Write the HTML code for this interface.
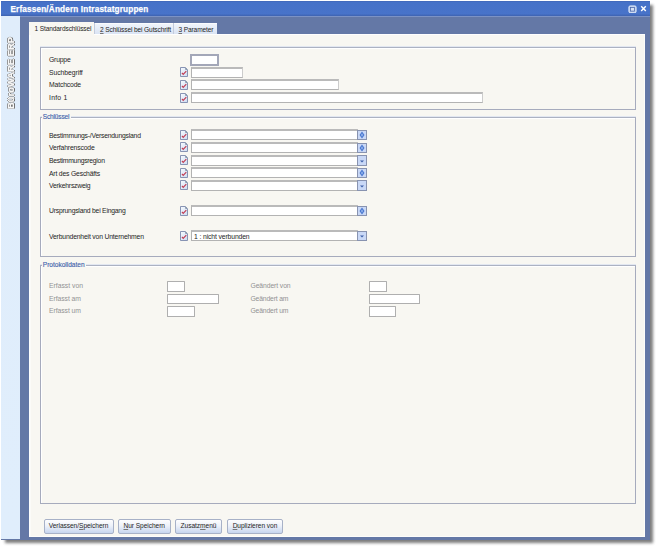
<!DOCTYPE html>
<html><head><meta charset="utf-8">
<style>
html,body{margin:0;padding:0;background:#fff;width:659px;height:548px;overflow:hidden;}
body{font-family:"Liberation Sans",sans-serif;position:relative;}
.a{position:absolute;}
.shadow{left:5px;top:5px;width:648px;height:538px;background:#6e6e6e;filter:blur(1.6px);opacity:.9;}
u{text-decoration-color:#777;text-decoration-thickness:0.6px;text-underline-offset:0.8px;}
.win{left:1px;top:1px;width:649px;height:539px;background:#6478a6;}
.title{left:1px;top:1px;width:649px;height:15px;background:linear-gradient(#3f64b4 0,#4672c8 8%,#4873c9 85%,#3e62b0 100%);}
.ttext{left:10.5px;top:4.5px;font-size:8.2px;font-weight:bold;color:#fff;white-space:nowrap;line-height:10px;letter-spacing:0.16px;-webkit-text-stroke:0.25px #fff;}
.side{left:1px;top:16px;width:19px;height:523px;background:linear-gradient(to bottom,#e0edfb,#e0eefc);}
.content{left:29px;top:34px;width:616px;height:502.5px;background:#f8f7f2;box-shadow:inset 1px 1px 0 #fefefe,inset 2px 0 0 #fbfbf8,inset -1px -1px 0 #fdfdfb;}
.tab{font-size:6.6px;letter-spacing:-0.13px;color:#1e1e1e;white-space:nowrap;line-height:8px;}
.tab1{left:29px;top:22px;width:65px;height:13px;background:#f8f7f2;}
.tab2{left:94px;top:23px;width:79px;height:11px;background:linear-gradient(#f2f6fc,#dae4f4);box-shadow:inset 1px 0 0 #c3cbdc,inset 0 1px 0 #fbfcfe;}
.tab3{left:173px;top:23px;width:44px;height:11px;background:linear-gradient(#f2f6fc,#dae4f4);box-shadow:inset 1px 0 0 #c3cbdc,inset 0 1px 0 #fbfcfe;}
.grp{border:1px solid #a6abbd;border-top-color:#acb2c2;box-shadow:inset 1px 1px 0 #fff,0 -1px 0 #e2e7f1;}
.lbl{font-size:6.8px;color:#1e1e1e;white-space:nowrap;left:49px;line-height:8px;letter-spacing:-0.17px;}
.gl{color:#929292;}
.leg{font-size:6.6px;letter-spacing:-0.1px;color:#3d61ab;background:#f8f7f2;padding:0 1.3px 0 1px;white-space:nowrap;line-height:8px;-webkit-text-stroke:0.12px #3d61ab;}
.inp{background:#fff;border:1px solid #b3b3b3;border-top:2px solid #bababa;border-right-color:#cccccc;box-sizing:border-box;}
.inp2{background:#fff;border:1px solid #afafaf;border-radius:0.6px;box-sizing:border-box;}
.ico{width:8px;height:10px;}
.btn{height:14.5px;top:519px;box-sizing:border-box;border:1px solid #a7b1c7;border-radius:2px;background:linear-gradient(#fdfdfe,#edf1f9 45%,#c6d5ef);font-size:6.6px;color:#1e1e1e;text-align:center;line-height:12.5px;white-space:nowrap;letter-spacing:-0.05px;}
.sb{width:10px;box-sizing:border-box;border:1px solid #8893b0;background:#c9d8f6;}
</style></head><body>
<div class="a shadow"></div>
<div class="a win"></div>
<div class="a title"></div>
<div class="a ttext">Erfassen/Ändern Intrastatgruppen</div>
<svg class="a" style="left:627.5px;top:4.5px" width="9" height="8.5" viewBox="0 0 9 8.5"><rect x=".9" y=".9" width="7.2" height="6.8" rx="1.3" fill="#b4c6ea" stroke="#e8effa" stroke-width=".9"/><rect x="2.6" y="2.5" width="3.8" height="3.6" fill="#d6e1f5" stroke="#4a66a8" stroke-width=".75"/></svg>
<svg class="a" style="left:640px;top:5px" width="7" height="7" viewBox="0 0 7 7"><path d="M1.2 1.2L5.8 5.9M5.8 1.2L1.2 5.9" stroke="#fff" stroke-width="1.4"/></svg>
<div class="a" style="left:20px;top:16px;width:630px;height:1px;background:#7c92c4"></div>
<div class="a side"></div>
<div class="a" style="left:-25.5px;top:67.5px;width:72px;height:10px;transform:rotate(-90deg) scaleY(1.03);font-size:9.4px;font-weight:bold;color:#f6f8fa;text-shadow:0 0.9px 0.2px #404040,0 -0.8px 0.2px #707070,0.6px 0 0.2px #808080,-0.6px 0 0.2px #808080;filter:grayscale(1);-webkit-text-stroke:0.45px #f7f8fa;white-space:nowrap;text-align:center;line-height:10px;">BüroWARE ERP</div>
<div class="a content"></div>
<div class="a tab tab2"></div>
<div class="a tab tab3"></div>
<div class="a tab tab1"></div>
<div class="a tab" style="left:34.5px;top:25px">1 Standardschlüssel</div>
<div class="a tab" style="left:100px;top:25.6px"><u>2</u> Schlüssel bei Gutschrift</div>
<div class="a tab" style="left:178.5px;top:25.6px"><u>3</u> Parameter</div>
<div class="a grp" style="left:40px;top:47px;width:594px;height:61px;"></div>
<div class="a lbl" style="top:56px;letter-spacing:-0.2px">Gruppe</div>
<div class="a lbl" style="top:68.5px;letter-spacing:-0.05px">Suchbegriff</div>
<div class="a lbl" style="top:81px;letter-spacing:-0.15px">Matchcode</div>
<div class="a lbl" style="top:93.5px;letter-spacing:0.25px">Info 1</div>
<div class="a" style="left:190px;top:53.5px;width:29px;height:12px;box-sizing:border-box;border:2px solid #a3a7b8;background:#fff;"></div>
<div class="a inp" style="left:191px;top:66.8px;width:52px;height:11px"></div>
<svg class="a ico" style="left:180px;top:67.3px" width="8" height="10" viewBox="0 0 8 10"><defs><linearGradient id="g0" x1="0" y1="0" x2="1" y2="1"><stop offset="0" stop-color="#f8fbff"/><stop offset="1" stop-color="#cddcf2"/></linearGradient></defs><path d="M.5 .5H5.3L7.5 2.7V9.5H.5Z" fill="url(#g0)" stroke="#7c89ac" stroke-width=".9"/><path d="M5.3 .5L7.5 2.7L5.3 2.7Z" fill="#6e8096"/><path d="M1.9 5.9L3.2 7.3L6.3 4.2" fill="none" stroke="#c23a50" stroke-width="1.15"/></svg>
<div class="a inp" style="left:191px;top:79.2px;width:148px;height:11px"></div>
<svg class="a ico" style="left:180px;top:79.7px" width="8" height="10" viewBox="0 0 8 10"><defs><linearGradient id="g1" x1="0" y1="0" x2="1" y2="1"><stop offset="0" stop-color="#f8fbff"/><stop offset="1" stop-color="#cddcf2"/></linearGradient></defs><path d="M.5 .5H5.3L7.5 2.7V9.5H.5Z" fill="url(#g1)" stroke="#7c89ac" stroke-width=".9"/><path d="M5.3 .5L7.5 2.7L5.3 2.7Z" fill="#6e8096"/><path d="M1.9 5.9L3.2 7.3L6.3 4.2" fill="none" stroke="#c23a50" stroke-width="1.15"/></svg>
<div class="a inp" style="left:191px;top:92px;width:292px;height:11px"></div>
<svg class="a ico" style="left:180px;top:92.5px" width="8" height="10" viewBox="0 0 8 10"><defs><linearGradient id="g2" x1="0" y1="0" x2="1" y2="1"><stop offset="0" stop-color="#f8fbff"/><stop offset="1" stop-color="#cddcf2"/></linearGradient></defs><path d="M.5 .5H5.3L7.5 2.7V9.5H.5Z" fill="url(#g2)" stroke="#7c89ac" stroke-width=".9"/><path d="M5.3 .5L7.5 2.7L5.3 2.7Z" fill="#6e8096"/><path d="M1.9 5.9L3.2 7.3L6.3 4.2" fill="none" stroke="#c23a50" stroke-width="1.15"/></svg>
<div class="a grp" style="left:40px;top:117px;width:594px;height:138px;"></div>
<div class="a leg" style="left:41.8px;top:113.3px;letter-spacing:-0.2px">Schlüssel</div>
<div class="a lbl" style="top:131.5px;letter-spacing:-0.22px">Bestimmungs-/Versendungsland</div>
<div class="a lbl" style="top:144px;letter-spacing:-0.14px">Verfahrenscode</div>
<div class="a lbl" style="top:156.5px;letter-spacing:-0.26px">Bestimmungsregion</div>
<div class="a lbl" style="top:169.5px;letter-spacing:-0.18px">Art des Geschäfts</div>
<div class="a lbl" style="top:182px;letter-spacing:-0.22px">Verkehrszweig</div>
<div class="a lbl" style="top:207px;letter-spacing:-0.22px">Ursprungsland bei Eingang</div>
<div class="a lbl" style="top:232.5px;letter-spacing:-0.17px">Verbundenheit von Unternehmen</div>
<div class="a inp" style="left:191px;top:129.3px;width:167px;height:11.2px"></div>
<div class="a sb" style="left:357px;top:129.9px;height:10.6px"></div><svg class="a" style="left:359px;top:131.20000000000002px" width="6" height="8" viewBox="0 0 6 8"><path d="M3 .5L5.5 4L3 7.5L.5 4Z" fill="#4a78d0"/><path d="M3 2.2L4.2 4L3 5.8L1.8 4Z" fill="#8fb0ea"/></svg>
<svg class="a ico" style="left:180px;top:129.8px" width="8" height="10" viewBox="0 0 8 10"><defs><linearGradient id="g3" x1="0" y1="0" x2="1" y2="1"><stop offset="0" stop-color="#f8fbff"/><stop offset="1" stop-color="#cddcf2"/></linearGradient></defs><path d="M.5 .5H5.3L7.5 2.7V9.5H.5Z" fill="url(#g3)" stroke="#7c89ac" stroke-width=".9"/><path d="M5.3 .5L7.5 2.7L5.3 2.7Z" fill="#6e8096"/><path d="M1.9 5.9L3.2 7.3L6.3 4.2" fill="none" stroke="#c23a50" stroke-width="1.15"/></svg>
<div class="a inp" style="left:191px;top:141.9px;width:167px;height:11.2px"></div>
<div class="a sb" style="left:357px;top:142.5px;height:10.6px"></div><svg class="a" style="left:359px;top:143.8px" width="6" height="8" viewBox="0 0 6 8"><path d="M3 .5L5.5 4L3 7.5L.5 4Z" fill="#4a78d0"/><path d="M3 2.2L4.2 4L3 5.8L1.8 4Z" fill="#8fb0ea"/></svg>
<svg class="a ico" style="left:180px;top:142.4px" width="8" height="10" viewBox="0 0 8 10"><defs><linearGradient id="g4" x1="0" y1="0" x2="1" y2="1"><stop offset="0" stop-color="#f8fbff"/><stop offset="1" stop-color="#cddcf2"/></linearGradient></defs><path d="M.5 .5H5.3L7.5 2.7V9.5H.5Z" fill="url(#g4)" stroke="#7c89ac" stroke-width=".9"/><path d="M5.3 .5L7.5 2.7L5.3 2.7Z" fill="#6e8096"/><path d="M1.9 5.9L3.2 7.3L6.3 4.2" fill="none" stroke="#c23a50" stroke-width="1.15"/></svg>
<div class="a inp" style="left:191px;top:154.6px;width:167px;height:11.2px"></div>
<div class="a sb" style="left:357px;top:155.2px;height:10.6px"></div><svg class="a" style="left:359px;top:156.5px" width="6" height="8" viewBox="0 0 6 8"><path d="M1 3.5H5L3 5.5Z" fill="#3d5fa8"/></svg>
<svg class="a ico" style="left:180px;top:155.1px" width="8" height="10" viewBox="0 0 8 10"><defs><linearGradient id="g5" x1="0" y1="0" x2="1" y2="1"><stop offset="0" stop-color="#f8fbff"/><stop offset="1" stop-color="#cddcf2"/></linearGradient></defs><path d="M.5 .5H5.3L7.5 2.7V9.5H.5Z" fill="url(#g5)" stroke="#7c89ac" stroke-width=".9"/><path d="M5.3 .5L7.5 2.7L5.3 2.7Z" fill="#6e8096"/><path d="M1.9 5.9L3.2 7.3L6.3 4.2" fill="none" stroke="#c23a50" stroke-width="1.15"/></svg>
<div class="a inp" style="left:191px;top:167.2px;width:167px;height:11.2px"></div>
<div class="a sb" style="left:357px;top:167.79999999999998px;height:10.6px"></div><svg class="a" style="left:359px;top:169.1px" width="6" height="8" viewBox="0 0 6 8"><path d="M3 .5L5.5 4L3 7.5L.5 4Z" fill="#4a78d0"/><path d="M3 2.2L4.2 4L3 5.8L1.8 4Z" fill="#8fb0ea"/></svg>
<svg class="a ico" style="left:180px;top:167.7px" width="8" height="10" viewBox="0 0 8 10"><defs><linearGradient id="g6" x1="0" y1="0" x2="1" y2="1"><stop offset="0" stop-color="#f8fbff"/><stop offset="1" stop-color="#cddcf2"/></linearGradient></defs><path d="M.5 .5H5.3L7.5 2.7V9.5H.5Z" fill="url(#g6)" stroke="#7c89ac" stroke-width=".9"/><path d="M5.3 .5L7.5 2.7L5.3 2.7Z" fill="#6e8096"/><path d="M1.9 5.9L3.2 7.3L6.3 4.2" fill="none" stroke="#c23a50" stroke-width="1.15"/></svg>
<div class="a inp" style="left:191px;top:179.8px;width:167px;height:11.2px"></div>
<div class="a sb" style="left:357px;top:180.4px;height:10.6px"></div><svg class="a" style="left:359px;top:181.70000000000002px" width="6" height="8" viewBox="0 0 6 8"><path d="M1 3.5H5L3 5.5Z" fill="#3d5fa8"/></svg>
<svg class="a ico" style="left:180px;top:180.3px" width="8" height="10" viewBox="0 0 8 10"><defs><linearGradient id="g7" x1="0" y1="0" x2="1" y2="1"><stop offset="0" stop-color="#f8fbff"/><stop offset="1" stop-color="#cddcf2"/></linearGradient></defs><path d="M.5 .5H5.3L7.5 2.7V9.5H.5Z" fill="url(#g7)" stroke="#7c89ac" stroke-width=".9"/><path d="M5.3 .5L7.5 2.7L5.3 2.7Z" fill="#6e8096"/><path d="M1.9 5.9L3.2 7.3L6.3 4.2" fill="none" stroke="#c23a50" stroke-width="1.15"/></svg>
<div class="a inp" style="left:191px;top:205.1px;width:167px;height:11.2px"></div>
<div class="a sb" style="left:357px;top:205.7px;height:10.6px"></div><svg class="a" style="left:359px;top:207.0px" width="6" height="8" viewBox="0 0 6 8"><path d="M3 .5L5.5 4L3 7.5L.5 4Z" fill="#4a78d0"/><path d="M3 2.2L4.2 4L3 5.8L1.8 4Z" fill="#8fb0ea"/></svg>
<svg class="a ico" style="left:180px;top:205.6px" width="8" height="10" viewBox="0 0 8 10"><defs><linearGradient id="g8" x1="0" y1="0" x2="1" y2="1"><stop offset="0" stop-color="#f8fbff"/><stop offset="1" stop-color="#cddcf2"/></linearGradient></defs><path d="M.5 .5H5.3L7.5 2.7V9.5H.5Z" fill="url(#g8)" stroke="#7c89ac" stroke-width=".9"/><path d="M5.3 .5L7.5 2.7L5.3 2.7Z" fill="#6e8096"/><path d="M1.9 5.9L3.2 7.3L6.3 4.2" fill="none" stroke="#c23a50" stroke-width="1.15"/></svg>
<div class="a inp" style="left:191px;top:230px;width:167px;height:11.2px"></div>
<div class="a sb" style="left:357px;top:230.6px;height:10.6px"></div><svg class="a" style="left:359px;top:231.9px" width="6" height="8" viewBox="0 0 6 8"><path d="M1 3.5H5L3 5.5Z" fill="#3d5fa8"/></svg>
<svg class="a ico" style="left:180px;top:230.5px" width="8" height="10" viewBox="0 0 8 10"><defs><linearGradient id="g9" x1="0" y1="0" x2="1" y2="1"><stop offset="0" stop-color="#f8fbff"/><stop offset="1" stop-color="#cddcf2"/></linearGradient></defs><path d="M.5 .5H5.3L7.5 2.7V9.5H.5Z" fill="url(#g9)" stroke="#7c89ac" stroke-width=".9"/><path d="M5.3 .5L7.5 2.7L5.3 2.7Z" fill="#6e8096"/><path d="M1.9 5.9L3.2 7.3L6.3 4.2" fill="none" stroke="#c23a50" stroke-width="1.15"/></svg>
<div class="a lbl" style="left:194px;top:232.5px;letter-spacing:-0.12px">1 : nicht verbunden</div>
<div class="a grp" style="left:40px;top:264.5px;width:594px;height:237.5px;"></div>
<div class="a leg" style="left:41.8px;top:260.6px;letter-spacing:-0.03px">Protokolldaten</div>
<div class="a lbl gl" style="top:282px;letter-spacing:0px">Erfasst von</div>
<div class="a lbl gl" style="top:294.5px;letter-spacing:-0.06px">Erfasst am</div>
<div class="a lbl gl" style="top:307px;letter-spacing:-0.06px">Erfasst um</div>
<div class="a lbl gl" style="left:250.5px;top:282px;letter-spacing:-0.1px">Geändert von</div>
<div class="a lbl gl" style="left:250.5px;top:294.5px;letter-spacing:-0.17px">Geändert am</div>
<div class="a lbl gl" style="left:250.5px;top:307px;letter-spacing:-0.17px">Geändert um</div>
<div class="a inp2" style="left:167px;top:281px;width:18px;height:10.5px"></div>
<div class="a inp2" style="left:167px;top:293.5px;width:52px;height:10.5px"></div>
<div class="a inp2" style="left:167px;top:306px;width:28px;height:10.5px"></div>
<div class="a inp2" style="left:368.5px;top:281px;width:18px;height:10.5px"></div>
<div class="a inp2" style="left:368.5px;top:293.5px;width:51.5px;height:10.5px"></div>
<div class="a inp2" style="left:368.5px;top:306px;width:27.5px;height:10.5px"></div>
<div class="a btn" style="left:43.5px;width:70px">Verlassen/<u>S</u>peichern</div>
<div class="a btn" style="left:118px;width:52.5px"><u>N</u>ur Speichern</div>
<div class="a btn" style="left:175px;width:47px">Zusatz<u>m</u>enü</div>
<div class="a btn" style="left:227px;width:56px"><u>D</u>uplizieren von</div>
</body></html>
